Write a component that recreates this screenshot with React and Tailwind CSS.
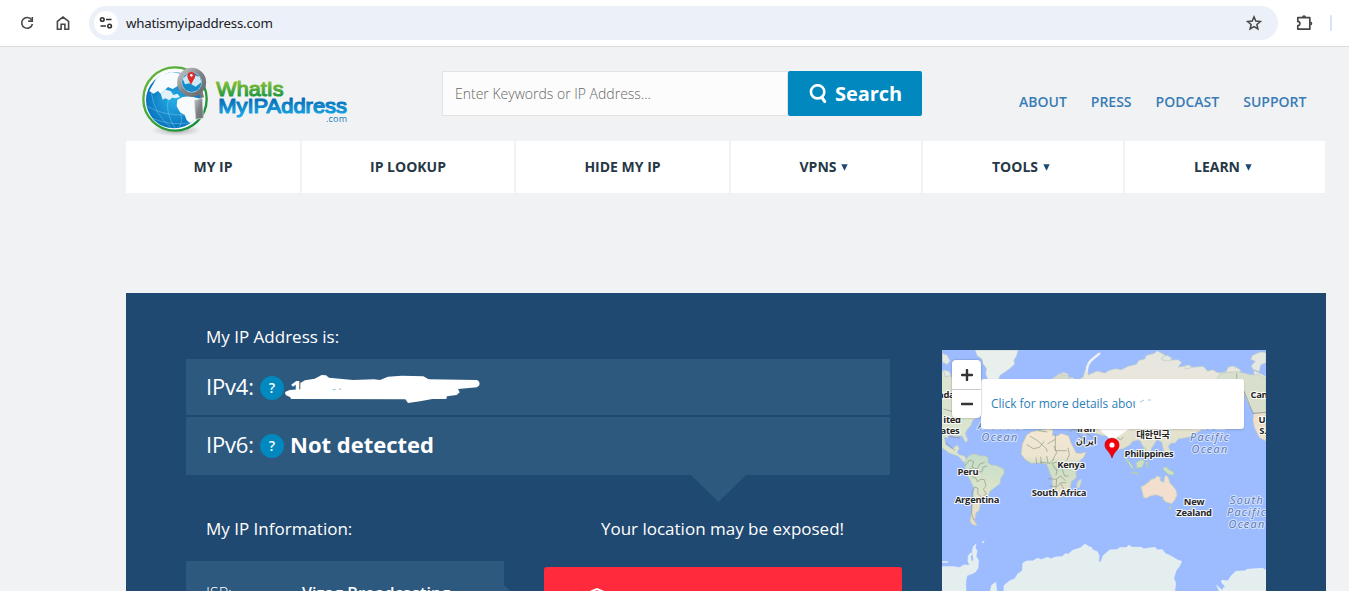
import React from "react";

const NAV = [
  { label: "MY IP", width: "w-[174px]" },
  { label: "IP LOOKUP", width: "w-[212px]" },
  { label: "HIDE MY IP", width: "w-[213px]" },
  { label: "VPNS", width: "w-[190px]", menu: true },
  { label: "TOOLS", width: "w-[200px]", menu: true },
  { label: "LEARN", width: "w-[200px]", menu: true },
];

function BrowserBar() {
  return (
    <div className="flex h-[47px] shrink-0 items-center border-b border-[#dcdcdc] bg-white">
      <svg className="ml-[19px] h-4 w-4" viewBox="0 0 16 16" fill="none" stroke="#474747" strokeWidth="1.6">
        <path d="M12.6 4.8A5.4 5.4 0 1 0 13.4 9" />
        <path d="M13.3 2v4.1H9.2" />
      </svg>
      <svg className="ml-5 h-4 w-4" viewBox="0 0 16 16" fill="none" stroke="#474747" strokeWidth="1.6">
        <path d="M2.4 6.4 8 2l5.6 4.4v7.8H9.9V9.3H6.1v4.9H2.4Z" />
      </svg>
      <div className="ml-[18px] flex h-[34px] w-[1189px] items-center rounded-full bg-[#ecf0f9]">
        <div className="ml-[5px] flex h-6 w-6 items-center justify-center rounded-full bg-white">
          <svg className="h-4 w-4" viewBox="0 0 16 16" fill="none" stroke="#333" strokeWidth="1.6">
            <circle cx="4.3" cy="4.5" r="1.8" />
            <path d="M8 4.5h5.5M2.5 11h5.5" />
            <circle cx="11.6" cy="11" r="1.8" />
          </svg>
        </div>
        <span className="ml-2 font-['Noto_Sans',sans-serif] text-[13.3px] leading-5 tracking-[-0.22px] text-[#202124]">whatismyipaddress.com</span>
        <svg className="mr-[15px] ml-auto h-[18px] w-[18px]" viewBox="0 0 18 18" fill="none" stroke="#474747" strokeWidth="1.5">
          <path d="m9 2.9 1.8 4.2 4.6.4-3.5 3 1 4.5L9 12.6l-3.9 2.4 1-4.5-3.5-3 4.6-.4Z" />
        </svg>
      </div>
      <svg className="ml-[17px] h-[18px] w-[18px]" viewBox="0 0 18 18">
        <path d="M2.8 3.6h12v11.6h-12v-3.7a2 2 0 0 0 0-4.1Z" fill="none" stroke="#474747" strokeWidth="1.7" strokeLinejoin="round" />
        <path d="M7 3.3a2 2 0 0 1 4 0ZM15.3 7.4a2 2 0 0 1 0 4Z" fill="#474747" />
      </svg>
      <div className="ml-[17px] h-4 w-0.5 rounded bg-[#d3e3fd]" />
    </div>
  );
}

function Logo() {
  return (
    <svg className="h-[78px] w-[212px]" viewBox="0 0 636 234">
      <defs>
        <linearGradient id="ring" x1="0" y1="0" x2="1" y2="1">
          <stop offset="0" stopColor="#72b83a" />
          <stop offset="1" stopColor="#078b3a" />
        </linearGradient>
        <radialGradient id="sea">
          <stop offset="0" stopColor="#27aee5" />
          <stop offset="1" stopColor="#0875bf" />
        </radialGradient>
        <linearGradient id="what" x1="0" y1="0" x2="0" y2="1">
          <stop offset="0.2" stopColor="#86bf38" />
          <stop offset="0.85" stopColor="#1e9840" />
        </linearGradient>
        <linearGradient id="addr" x1="0" y1="0" x2="0" y2="1">
          <stop offset="0.1" stopColor="#0568b2" />
          <stop offset="0.9" stopColor="#17a5e3" />
        </linearGradient>
        <linearGradient id="metal" x1="0" y1="0" x2="1" y2="1">
          <stop offset="0" stopColor="#c3c4c5" />
          <stop offset="0.5" stopColor="#818487" />
          <stop offset="1" stopColor="#686b6f" />
        </linearGradient>
        <radialGradient id="shade">
          <stop offset="0" stopColor="#777" stopOpacity=".65" />
          <stop offset="1" stopColor="#999" stopOpacity="0" />
        </radialGradient>
      </defs>
      <ellipse cx="109" cy="202" rx="76" ry="18" fill="url(#shade)" />
      <circle cx="105" cy="108" r="95" fill="#f8fafb" stroke="url(#ring)" strokeWidth="7" />
      <circle cx="102" cy="112" r="84" fill="url(#sea)" />
      <path d="M48 48 66 34 96 27 126 33 118 50 112 70 98 78 84 72 72 84 62 92 54 84 40 92 28 84Z" fill="#f7fbfd" />
      <path d="M62 92 76 80 92 84 100 96 112 92 120 102 108 106 96 104 88 112 76 106 68 110Z" fill="#dff1f9" />
      <path d="M112 110 128 102 148 100 185 108 184 132 176 155 164 171 150 180 140 172 134 156 120 148 110 130Z" fill="#f8fbfd" />
      <g fill="none" stroke="#94d2ed" strokeWidth="1.5" opacity=".8">
        <path d="M22 130Q70 158 134 156M40 167Q90 188 148 180M34 90Q43 155 94 194M85 110Q75 147 105 195M122 150Q128 175 118 192" />
      </g>
      <circle cx="155" cy="58" r="37" fill="#bde4f4" stroke="url(#metal)" strokeWidth="13" />
      <circle cx="155" cy="58" r="29" fill="#178cca" />
      <path d="m128 47 17-15 34 9 5 17-17 13-18-10-14 3Z" fill="#cceaf5" />
      <path d="M153 65C145 49 140 44 143 34c3-9 18-9 22 0 3 9-3 14-12 31Z" fill="#de2b29" />
      <circle cx="154" cy="37" r="4" fill="#fff" />
      <path d="m178 91 10-5 4 17-12 2Z" fill="#777" />
      <path d="m163 112 24-6 3 59-23 4Z" fill="url(#metal)" stroke="#d9dadb" strokeWidth="2" />
      <g fontFamily="Liberation Sans, sans-serif" strokeLinejoin="round">
        <text x="229" y="98" fontSize="61" fill="url(#what)" stroke="url(#what)" strokeWidth="3.4" textLength="202" lengthAdjust="spacingAndGlyphs">WhatIs</text>
        <text x="235" y="151" fontSize="61" fill="url(#addr)" stroke="url(#addr)" strokeWidth="3.6" textLength="386" lengthAdjust="spacingAndGlyphs">MyIPAddress</text>
      </g>
      <text x="558" y="177" fontFamily="Open Sans, sans-serif" fontSize="27" fill="#1178b9" textLength="63">.com</text>
    </svg>
  );
}

function Header() {
  return (
    <header className="flex h-[94px] items-start">
      <div className="mt-4 ml-3.5"><Logo /></div>
      <div className="mt-6 ml-[90px] flex h-[45px] w-[480px]">
        <div className="flex w-[346px] items-center border border-[#e3e3e3] bg-[#fcfcfc] pl-3 text-sm font-light text-[#666]">Enter Keywords or IP Address...</div>
        <div className="flex flex-1 items-center rounded-xs bg-[#0088bf] pl-[21px] text-white">
          <svg className="mr-[7px] h-5 w-[19px]" viewBox="0 0 19 20" fill="none" stroke="white" strokeLinecap="round">
            <ellipse cx="8.6" cy="7.8" rx="6.7" ry="6.6" strokeWidth="2.6" />
            <path d="m13 13.6 2.8 4" strokeWidth="3" />
          </svg>
          <span className="text-xl font-bold tracking-[-0.05px]">Search</span>
        </div>
      </div>
      <div className="mt-[45px] ml-[97px] flex gap-6 text-sm leading-5 font-semibold text-[#397bb5]">
        <span>ABOUT</span><span>PRESS</span><span>PODCAST</span><span>SUPPORT</span>
      </div>
    </header>
  );
}

function HelpDot() {
  return <span className="flex h-6 w-6 items-center justify-center rounded-full bg-[#0088bf] text-sm font-semibold text-white">?</span>;
}

const LABELS = [
  [4, 48, "nda"], [10, 73, "ited"], [8, 84, "ates"],
  [26, 125, "Peru"], [35, 153, "Argentina"], [129, 118, "Kenya"], [117, 146, "South Africa"],
  [144, 82, "Iran"], [144, 94, "ایران"], [211, 88, "대한민국"], [207, 107, "Philippines"],
  [317, 48, "Can"], [320, 73, "U"], [321, 84, "S."], [252, 155, "New"], [252, 166, "Zealand"],
];
const SEAS = [
  [59, 79, "Atlantic"], [58, 91, "Ocean"], [268, 79, "North"], [268, 91, "Pacific"], [268, 103, "Ocean"],
  [305, 154, "South"], [305, 166, "Pacific"], [305, 178, "Ocean"],
];

function WorldMap() {
  return (
    <svg className="block h-[241px] w-[324px]" viewBox="0 0 324 241">
      <defs>
        <linearGradient id="land" x1="0" y1="0" x2="0" y2="1">
          <stop offset="0" stopColor="#e6e7e2" />
          <stop offset="0.55" stopColor="#ece4d4" />
          <stop offset="1" stopColor="#dcdfc9" />
        </linearGradient>
        <linearGradient id="south" x1="0" y1="0" x2="0" y2="1">
          <stop offset="0" stopColor="#c4ddc8" />
          <stop offset="0.5" stopColor="#dce4ca" />
          <stop offset="1" stopColor="#efdac9" />
        </linearGradient>
        <linearGradient id="africa" x1="0" y1="0" x2="0" y2="1">
          <stop offset="0" stopColor="#f3e8d3" />
          <stop offset="0.4" stopColor="#ece4cf" />
          <stop offset="0.55" stopColor="#c9dec4" />
          <stop offset="1" stopColor="#eee0cc" />
        </linearGradient>
      </defs>
      <path d="M0 0h324v241H0Z" fill="#9dbcff" />
      <g transform="translate(-2 -5) scale(.333333)">
        <g stroke="#bbc8c6" strokeWidth="2">
          <path d="M105 15 H235 L229 35 222 45 224 58 208 72 194 82 180 91 173 112 158 120 145 108 137 88 139 70 129 57 126 42 111 32Z" fill="#e8efed" />
          <path d="m0 75 14 3 7 17 10-8 9 23 12-14 12 17 50 1 18 26-16 7 20 13-26 8-5 13 22 4 10 14-20 10-6 9-13 8-5 15-12 13-5 12 8 19-7 8-11-20-21 1-14-5-9 10-9-2 4 22 19 13 9-7 7-5 6 10-7 12 7 7 16 4 7 14 11 3-2 5-19-3-16-18-28-10-35-26Z" fill="#dbe4cf" />
          <path d="m7 25 15 6 8 16-8 12-15-8Zm4 49 18 6 3 12-17 3Z" fill="#e4e9e6" />
          <path d="m208 116 16-5 15 6-3 10-17 5-12-7Z" fill="#e8efed" />
          <path d="m330 120 10-22 17-8 13-8 15 5-2 11 14-1 12 10 20-10 5-18 11-2-1 13 28-12 22 6 14-8 18-5 18 3 22-11 23-5 8-12 17-4 5-11 24-6 8-8 29 16 12 12 22-1 11 8-10 14 34-5 7 6 33-3 14 14 16-4 14 9 24-2 8-15 13-3 17 7 7 6-2 21-6 30-78 110-70 40-31 5-10 13-11-1-9 10 9 20-12 9-12-18-5-23-14-8-15 24-13 33-9-17-7-24-9-15-20 4-8 11-20 11-16 3-9-12-15-31-20 1-30-9-30 5-10-10 20-50Z" fill="url(#land)" />
          <path d="m345 95 14-10 22 6 12 9-20 5-18 20-16 12Z" fill="#d3dacb" />
          <path d="m666 36 16-5 15 9-10 8-21-3Zm67 26 16-2 5 8-17 4ZM937 31l26-11 15 3v30l-16 7-4 20-20-7-4-11 12-13-14-6Zm4 45 37 18v23l-23-19-13-7Z" fill="#e3e8e0" />
          <path d="m830 102 10-16 22-4 34-2 36 9 23 0 23 13v104l-23 1-16-5-19-36-10-31-31-18-19 6Z" fill="#d9dfcd" />
          <path d="m940 207 38-5v86l-20-10-14-28-5-22Z" fill="#efe0cb" />
        </g>
        <path d="M440 78Q442 55 458 42L478 26" fill="none" stroke="#edf2ee" strokeWidth="7" strokeLinecap="round" />
        <path d="m510 110 25 30 45-12 42 12 50-25 53 20 66-23M26 275l34 4m-43 13 28 24M11 192l34 10 52-7M387 260l13-8 35 9 19 14 14 10m-60-32 7 17 25 17m34-40 18 12 10 15 20-6 19 17 9-9m-27-33 27 7 10-17M890 85l1 31 20 20 28 69 39-3" fill="none" stroke="#938f86" strokeWidth="2" />
        <g transform="translate(0 345)">
          <path d="m75 10 6-17 12-10 15-1 9 5 20 1 8 8-1 12 10 7 14 1 24 12v13l-9 12-3 18-17 13-13 10-7 17-15 3 1 9-8 10-3 18-10 8-2 14-4 7 10 17-15-3-7-10 4-22 2-25 6-52-13-28-14-21 1-12Z" fill="url(#south)" stroke="#b8cab9" strokeWidth="2" />
          <path d="m260-75 14-10 25-4 27-4 14 4-3 15 16 1 10-7 23 7 7 21 16 31 13 1 17-4-8 16-14 13-9 20 1 28-15 12-2 17-13 14-12 14-19 5-5-12-6-20-1-31-7-14-9-25-19-4-28 1-18-12-12-16 4-30Z" fill="url(#africa)" stroke="#bfc2ac" strokeWidth="2" />
          <path d="m416 62 8-6v9l-7 20-7-3 1-12Z" fill="#d9dfbd" />
          <path d="m603 80 10-4 14-11 5-6 14-4 5-7 12 5-4 8 12 7 3-17 5-6 6 9 5 16 8 7 10 14 3 13-6 15-10 12-19-6-7-8 1-5-13-5-9-3-17 4-10 6-10-1-4-17Z" fill="#f2dfce" stroke="#c7d1b3" strokeWidth="2" />
          <path d="m686 140 8 1-4 8Zm84-4 11-7 2-11-13 13Zm-4-2-13 14-6 2 8-9ZM550-12l7 4 20 25 5 12-9-7-12-18Zm26 47 21 5-1 3-21-4ZM588 8l16-10 10 6-7 18-17 3Zm29 0 8-5-4 11 6 8-7-2Zm50 16 12-4 8 9 15 7-3 11-16-5-9-9ZM610-40l8 8-3 12 9 9-5 9-7-13Z" fill="#cee0c2" stroke="#a8c2ab" strokeWidth="2" />
          <g fill="#e4eeef" stroke="#edf4f2" strokeWidth="2">
            <path d="m6 320 12 0 20 0 21 3 12-8 14 1 9-6 7-11-4-24 3-15 8-8-3 12 6 7-3 18 7 12-1 23-8 12-14 7-11 3-3 13-1 14 1 20H6Z" />
            <path d="m84 303 1-15 7-9 4 2-5 10 5 18-9 2Zm-78 2h17v2H6ZM126 248l6-6-3 7ZM151 393l4-17 12-9 3 26Z" />
            <path d="m192 393 0-16 15-13 18-8 9-15 13-8 2-24 12-6 17 0 15-8 11 4 19-7 9 5 15-6 20-1 7-8 12 0 12-11 23-7 14-12 13 9 6 1 4 8 14 5 5 12-1 20 8-2 5-17 20-18 22-1 8-6 20 0 7-7 11 6 28 0 6 5 24-4 12 0 3 7 17-1 9 12 15 6 23 14 11 3-7 15-10 13-7 23 6 15-3 23Z" />
            <path d="m830 376 8 17h11v-9l8-2-13-16 2-5 18 2 10-16 14-13 25-1 10-5 45-3 10 6v62H849Z" />
          </g>
          <g fill="none" stroke="#8d9788" strokeWidth="2">
            <path d="m75 17 14-17 12 5-5 17 16 5 6-14 16-6m7 11-11 3-4 14-26 2-7-13-13 9m15 17 13 5 4 10 10-7 11 1 5 19-8 10 9 14-14 10-12-12 1-15-11-4-7 16-1 64 6 19" />
            <path d="m270-72 25 16 24 22 3 10 m-62-22 20 12 18-4 15-18m-18-32 27 4m24 8 0 48 34 0m-34-34-24 14m-34 40 2 20m12-22 2 22m16-24 4 20m18-50 8 20-12 22m46-36 4 20-8 18m-80 4 30 4 12-12m-6 12 14 22m-14-22 24-6 14 4m-22 16 18 0 12-14m-30 14-4 22m18-20 8 22 12 0m-62 8 24 2 14-10 14 14m-48 16 22 2 14-12 14 0m-28-10-2 24-8 24m22-36 12 22" />
          </g>
        </g>
      </g>
      <g fontFamily="Open Sans, Noto Sans CJK KR, sans-serif" textAnchor="middle" stroke="white" strokeOpacity=".85" strokeWidth="2.2" strokeLinejoin="round" paintOrder="stroke">
        {SEAS.map(([x, y, t], i) => (
          <text key={i} x={x} y={y} fontSize="10.8" fontStyle="italic" letterSpacing="1.3" fill="#5a77a8" strokeOpacity=".55">{t}</text>
        ))}
        {LABELS.map(([x, y, t], i) => (
          <text key={i} x={x} y={y} fontSize="9.4" fontWeight="700" letterSpacing="-.25" fill="#252525">{t}</text>
        ))}
      </g>
      <path d="M157 79h30l-17 12Z" fill="#fff" />
      <path d="M170 108c-2-7-7-8-7-13 0-9 14-9 14 0 0 5-5 6-7 13Z" fill="#f3000a" stroke="#c40010" strokeWidth=".7" />
      <circle cx="170" cy="95" r="2.6" fill="white" />
    </svg>
  );
}

function MapCard() {
  return (
    <div className="relative mt-[57px] ml-[52px] h-[241px] w-[324px] overflow-hidden">
      <WorldMap />
      <div className="absolute top-[29px] left-[39px] flex h-[50px] w-[263px] items-center rounded-[3px] bg-white pl-[10px] text-xs tracking-[-0.03px] text-[#2b7fb8] shadow-[0_1px_2px_rgba(0,0,0,0.15)]">
        <span className="w-[144px] overflow-hidden whitespace-nowrap">Click for more details about</span>
        <svg className="ml-1 h-3 w-4" viewBox="0 0 16 12"><path d="m1 4 4-2M9 2h3" stroke="#9bc9e5" /></svg>
      </div>
      <div className="absolute top-[10px] left-[10px] flex h-[58px] w-[29px] flex-col rounded bg-white shadow-[0_0_2px_rgba(0,0,0,0.4)]">
        <div className="flex h-[30px] items-center justify-center border-b border-[#ccc]">
          <svg className="h-3 w-3" viewBox="0 0 12 12"><path d="M1 6h10M6 1v10" stroke="#333" strokeWidth="2.4" strokeLinecap="round" /></svg>
        </div>
        <div className="flex flex-1 items-center justify-center">
          <svg className="h-3 w-3" viewBox="0 0 12 12"><path d="M1 6h10" stroke="#333" strokeWidth="2.6" strokeLinecap="round" /></svg>
        </div>
      </div>
    </div>
  );
}

function Scribble() {
  return (
    <svg className="absolute top-[2px] left-[-5px] h-[30px] w-[198px]" viewBox="0 0 594 90">
      <path d="M14 45 46 43 46 24 60 16 89 11 110 0 123 1 132 8 204 15 267 13 285 15 309 5 350 2 415 4 431 13 575 15Q586 19 583 31L576 37 519 42 524 52 515 60 486 64 484 72 442 72 405 79 369 84 361 73 18 72 16 67 2 60 0 51Z" fill="white" />
      <path d="m143 44 9 0M162 43l7-1" stroke="#8ec6dc" strokeWidth="3" />
    </svg>
  );
}

export default function App() {
  return (
    <div className="flex h-[591px] w-[1349px] flex-col overflow-hidden bg-[#f1f2f4] font-['Open_Sans',sans-serif]">
      <BrowserBar />
      <div className="ml-[126px] w-[1200px] shrink-0">
        <Header />
        <nav className="flex h-[52px] gap-0.5 text-sm font-bold text-[#263746]">
          {NAV.map((item) => (
            <div key={item.label} className={`flex shrink-0 items-center justify-center bg-white ${item.width}`}>
              <span>{item.label}</span>
              {item.menu && (
                <svg className="mr-1 ml-[5px] h-[7px] w-[7px]" viewBox="0 0 7 7"><path d="M.3.3h6.4l-3.2 6.4Z" fill="#1f4973" /></svg>
              )}
            </div>
          ))}
        </nav>
        <main className="mt-[100px] flex h-[400px] items-start bg-[#1f4971] pl-[60px] text-white">
          <div className="w-[704px]">
            <h2 className="flex h-[66px] items-end pb-[10px] pl-5 text-[17px] leading-6">My IP Address is:</h2>
            <div className="flex h-14 items-center bg-[#2d597f] pt-px pl-5 text-[22px]">
              <span className="w-[54px] pb-[3px] tracking-[-0.2px]">IPv4:</span>
              <HelpDot />
              <div className="relative ml-[6px] h-[30px] w-[190px] text-[22px] leading-[29px] font-bold">
                <span>1</span>
                <Scribble />
              </div>
            </div>
            <div className="mt-0.5 flex h-[58px] items-center bg-[#2d597f] pl-5 text-[22px]">
              <span className="w-[54px] pb-[3px] tracking-[-0.2px]">IPv6:</span>
              <HelpDot />
              <span className="ml-[6px] pb-[3px] font-bold">Not detected</span>
            </div>
            <svg className="ml-[504.5px] block h-[27px] w-[55px]" viewBox="0 0 55 27"><path d="M0 0h55L27.5 27Z" fill="#2d597f" /></svg>
            <div className="flex">
              <section className="w-[318px] shrink-0">
                <h2 className="mt-[15px] pl-5 text-[17px] leading-6">My IP Information:</h2>
                <div className="mt-5 flex h-[140px] bg-[#2d597f] pt-[20px] pl-5 text-base leading-6">
                  <span className="w-24 font-light">ISP:</span>
                  <span className="font-semibold tracking-[0.15px]">Vizag Broadcasting</span>
                </div>
              </section>
              <svg className="mt-[83px] block h-10 w-10 shrink-0" viewBox="0 0 40 40"><path d="M0 0 40 40H0Z" fill="#2d597f" /></svg>
              <section className="w-[358px] shrink-0">
                <h2 className="mt-[15px] pr-px text-center text-[17px] leading-6">Your location may be exposed!</h2>
                <div className="mt-[26px] h-20 rounded-[3px] bg-[#ff2a3b] pt-[21px] pl-[45px]">
                  <svg className="h-6 w-4" viewBox="0 0 16 24" fill="none" stroke="white" strokeWidth="2"><path d="m1 4 7-3 7 3v8c0 6-7 10-7 10S1 18 1 12Z" /></svg>
                </div>
              </section>
            </div>
          </div>
          <MapCard />
        </main>
      </div>
    </div>
  );
}
